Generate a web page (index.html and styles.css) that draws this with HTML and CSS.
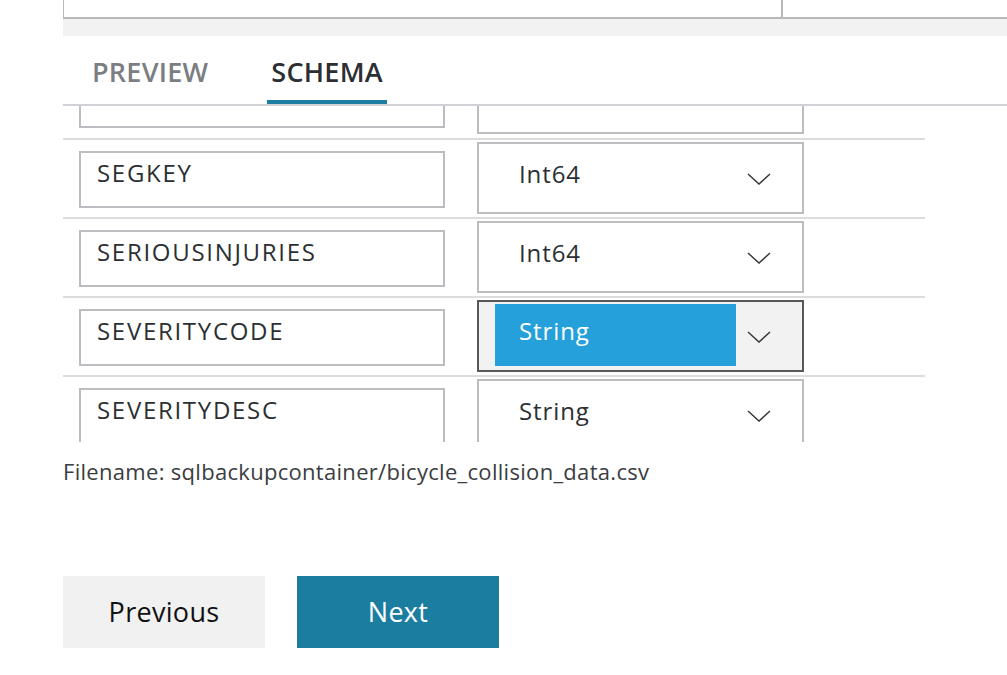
FILE: index.html
```html
<!DOCTYPE html>
<html lang="en">
<head>
<meta charset="utf-8">
<title>Schema</title>
<link rel="stylesheet" href="styles.css">
</head>
<body>
<div class="page">
  <div class="topbox">
    <div class="topcell"></div>
    <div class="topcell last"></div>
  </div>
  <div class="band"></div>
  <div class="tabs">
    <div class="tab">PREVIEW</div>
    <div class="tab active">SCHEMA</div>
  </div>
  <div class="scroll">
    <div class="rows">
      <div class="row">
        <div class="field">SDOT_WEATHER</div>
        <div class="select"><span class="val">Int64</span><svg class="chev" viewBox="0 0 24 12" width="24" height="12"><polyline points="1,1 12,11 23,1" fill="none" stroke="#333" stroke-width="1.4"/></svg></div>
      </div>
      <div class="row">
        <div class="field">SEGKEY</div>
        <div class="select"><span class="val">Int64</span><svg class="chev" viewBox="0 0 24 12" width="24" height="12"><polyline points="1,1 12,11 23,1" fill="none" stroke="#333" stroke-width="1.4"/></svg></div>
      </div>
      <div class="row">
        <div class="field">SERIOUSINJURIES</div>
        <div class="select"><span class="val">Int64</span><svg class="chev" viewBox="0 0 24 12" width="24" height="12"><polyline points="1,1 12,11 23,1" fill="none" stroke="#333" stroke-width="1.4"/></svg></div>
      </div>
      <div class="row">
        <div class="field">SEVERITYCODE</div>
        <div class="select focused"><span class="val hl">String</span><svg class="chev" viewBox="0 0 24 12" width="24" height="12"><polyline points="1,1 12,11 23,1" fill="none" stroke="#333" stroke-width="1.4"/></svg></div>
      </div>
      <div class="row">
        <div class="field">SEVERITYDESC</div>
        <div class="select"><span class="val">String</span><svg class="chev" viewBox="0 0 24 12" width="24" height="12"><polyline points="1,1 12,11 23,1" fill="none" stroke="#333" stroke-width="1.4"/></svg></div>
      </div>
    </div>
  </div>
  <p class="filename">Filename: sqlbackupcontainer/bicycle_collision_data.csv</p>
  <div class="buttons">
    <button class="btn prev">Previous</button>
    <button class="btn next">Next</button>
  </div>
</div>
</body>
</html>
```
FILE: styles.css
```css
html, body {
  margin: 0;
  padding: 0;
  background: #ffffff;
}
body {
  font-family: "Open Sans", "Noto Sans", sans-serif;
  color: #2b2f33;
  overflow: hidden;
}
.page {
  padding-left: 63px;
}
.topbox {
  display: flex;
  height: 17px;
  border-left: 1px solid #b9b9b9;
  border-bottom: 2px solid #b9b9b9;
}
.topcell {
  width: 717px;
  border-right: 2px solid #b9b9b9;
}
.topcell.last {
  flex: 1;
  border-right: none;
}
.band {
  height: 17px;
  background: #f2f2f2;
}
.tabs {
  display: flex;
  gap: 55px;
  height: 68px;
  padding-left: 25px;
  border-bottom: 2px solid #d2d2d6;
}
.tab {
  box-sizing: border-box;
  padding: 17px 4px 0;
  font-size: 27px;
  font-weight: 600;
  color: #7b7e82;
  letter-spacing: 0.25px;
}
.tab.active {
  color: #2b2f33;
  border-bottom: 4px solid #1b7da0;
}
.scroll {
  height: 336px;
  overflow: hidden;
}
.rows {
  margin-top: -46px;
  width: 862px;
}
.row {
  box-sizing: border-box;
  height: 79px;
  display: flex;
  align-items: flex-start;
  gap: 32px;
  padding-left: 16px;
  border-bottom: 2px solid #dcdcdc;
}
.row:first-child {
  height: 80px;
}
.field {
  box-sizing: border-box;
  margin-top: 11px;
  width: 366px;
  height: 57px;
  border: 2px solid #bdbdc1;
  padding: 0 16px 14px;
  display: flex;
  align-items: center;
  font-size: 24px;
  letter-spacing: 1.7px;
}
.select {
  box-sizing: border-box;
  margin-top: 2px;
  width: 327px;
  height: 72px;
  border: 2px solid #bdbdc1;
  display: flex;
  align-items: center;
  font-size: 24px;
  letter-spacing: 0.9px;
}
.val {
  padding: 0 0 10px 40px;
  width: 257px;
  box-sizing: border-box;
}
.chev {
  margin-left: 11px;
  margin-top: 1px;
}
.select.focused {
  border-color: #58585c;
  background: #f2f2f2;
  align-items: flex-start;
}
.val.hl {
  margin: 2px 0 0 16px;
  width: 241px;
  height: 62px;
  padding: 10px 0 0 24px;
  background: #25a0da;
  color: #ffffff;
}
.select.focused .chev {
  margin-left: 11px;
  margin-top: 29px;
}
.filename {
  margin: 14px 0 0;
  font-size: 22px;
  color: #3a3d41;
  letter-spacing: 0.3px;
}
.buttons {
  display: flex;
  gap: 32px;
  margin-top: 90px;
}
.btn {
  width: 202px;
  height: 72px;
  border: none;
  padding: 0 0 1px;
  font-family: "Open Sans", "Noto Sans", sans-serif;
  font-size: 27px;
  letter-spacing: 0.3px;
}
.btn.prev {
  background: #f1f1f1;
  color: #111111;
}
.btn.next {
  background: #1b7da0;
  color: #ffffff;
}
```
